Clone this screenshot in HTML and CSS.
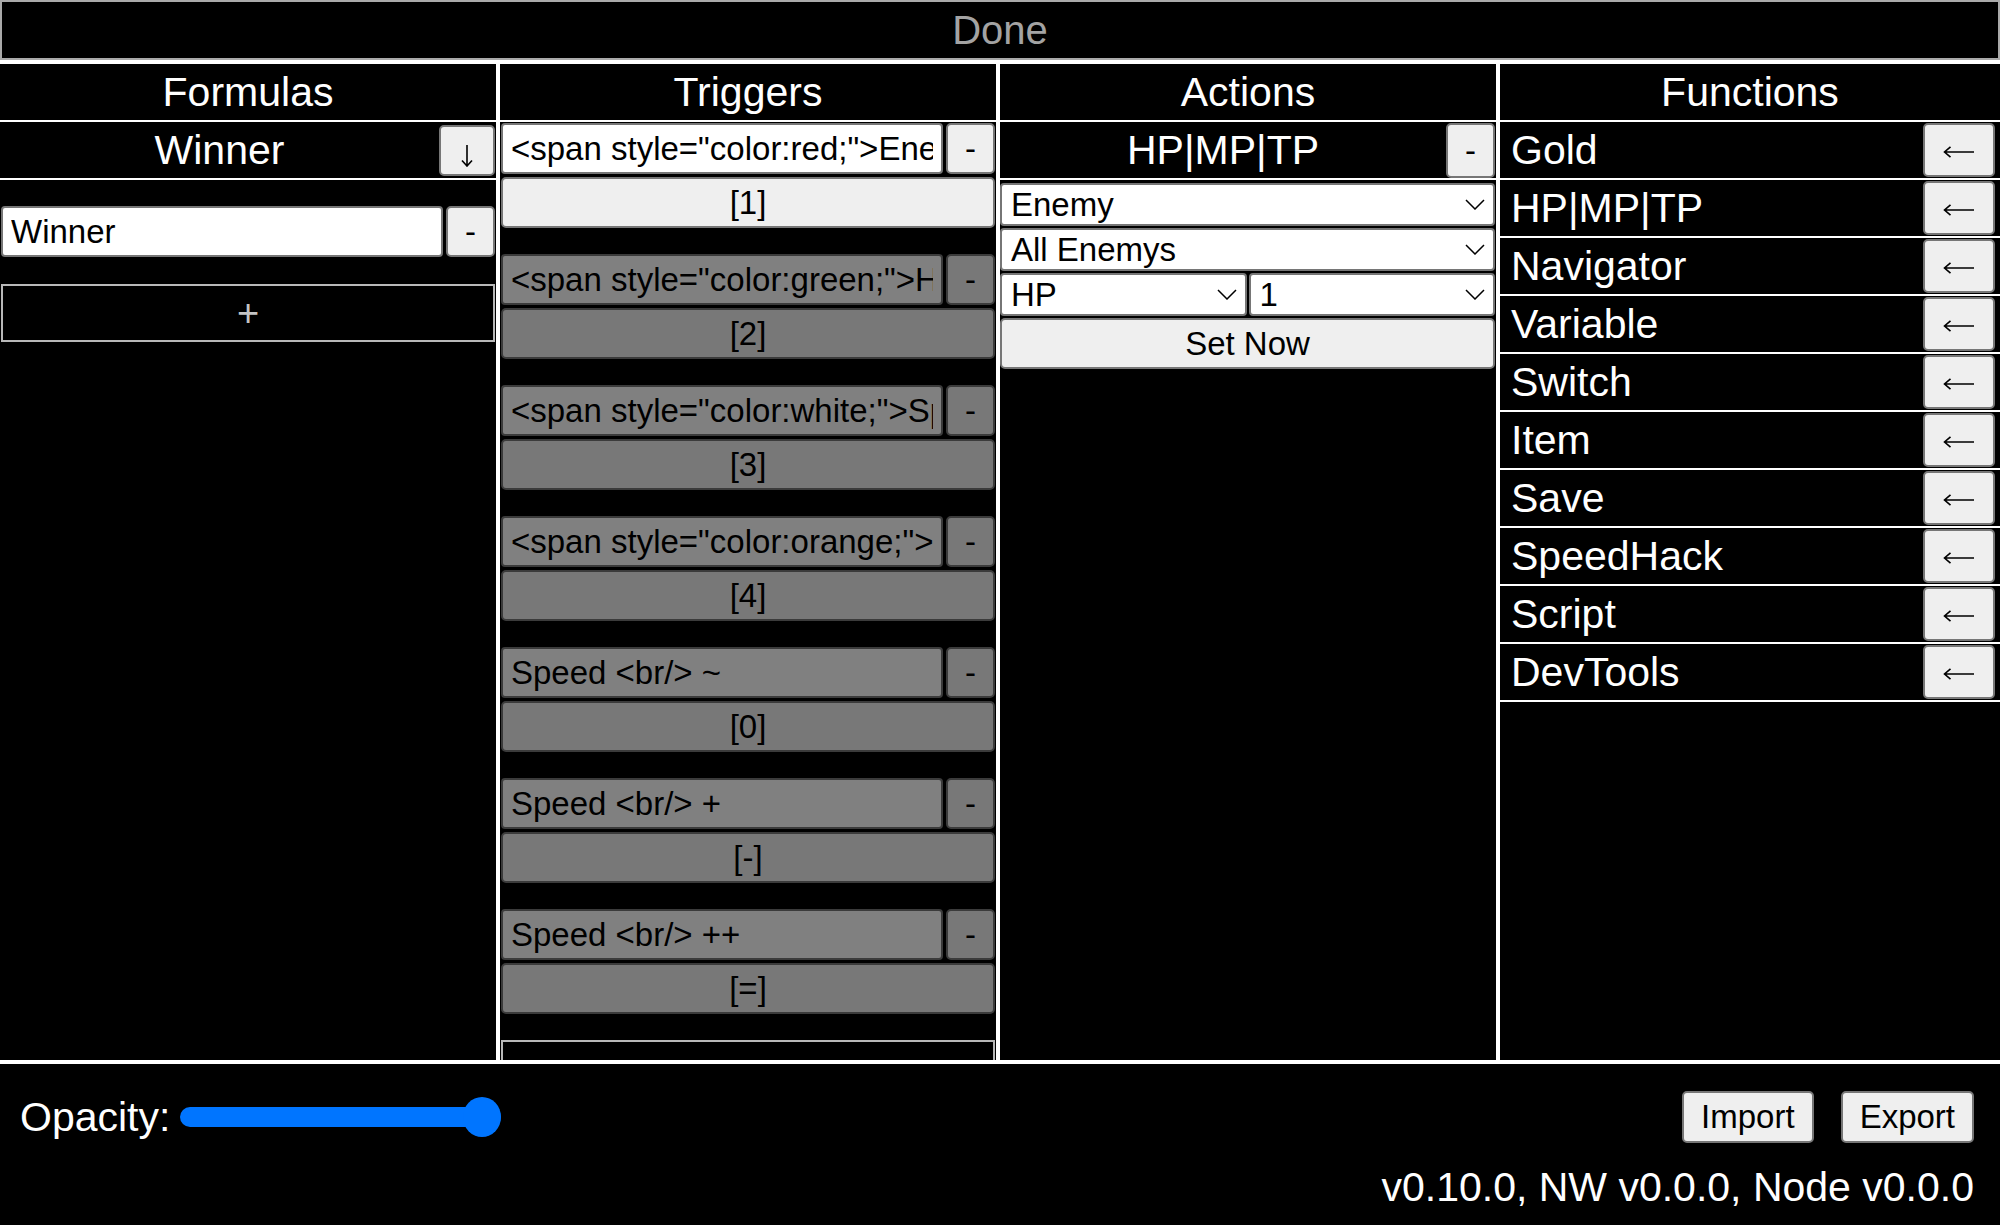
FILE: index.html
```html
<!DOCTYPE html>
<html lang="en">
<head>
<meta charset="utf-8">
<title>Cheat Panel</title>
<link rel="stylesheet" href="styles.css">
</head>
<body>
<div class="app">
  <button class="done">Done</button>

  <div class="columns">
    <section class="col">
      <div class="col-title">Formulas</div>
      <div class="head-row">
        <span class="head-label">Winner</span>
        <button class="btn btn-down"><svg width="12" height="22" viewBox="0 0 12 22"><path d="M6 0V21M1 15.5L6 21L11 15.5" fill="none" stroke="#000" stroke-width="1.6"/></svg></button>
      </div>
      <div class="formula-list">
        <div class="entry">
          <input class="field" type="text" value="Winner">
          <button class="btn btn-minus">-</button>
        </div>
        <button class="add">+</button>
      </div>
    </section>

    <section class="col">
      <div class="col-title">Triggers</div>
      <div class="trigger-list">
        <div class="trigger">
          <div class="entry">
            <input class="field" type="text" value="&lt;span style=&quot;color:red;&quot;&gt;Enemy">
            <button class="btn btn-minus">-</button>
          </div>
          <button class="btn btn-key">[1]</button>
        </div>
        <div class="trigger off">
          <div class="entry">
            <input class="field" type="text" value="&lt;span style=&quot;color:green;&quot;&gt;HP">
            <button class="btn btn-minus">-</button>
          </div>
          <button class="btn btn-key">[2]</button>
        </div>
        <div class="trigger off">
          <div class="entry">
            <input class="field" type="text" value="&lt;span style=&quot;color:white;&quot;&gt;Speed">
            <button class="btn btn-minus">-</button>
          </div>
          <button class="btn btn-key">[3]</button>
        </div>
        <div class="trigger off">
          <div class="entry">
            <input class="field" type="text" value="&lt;span style=&quot;color:orange;&quot;&gt;Gold">
            <button class="btn btn-minus">-</button>
          </div>
          <button class="btn btn-key">[4]</button>
        </div>
        <div class="trigger off">
          <div class="entry">
            <input class="field" type="text" value="Speed &lt;br/&gt; ~">
            <button class="btn btn-minus">-</button>
          </div>
          <button class="btn btn-key">[0]</button>
        </div>
        <div class="trigger off">
          <div class="entry">
            <input class="field" type="text" value="Speed &lt;br/&gt; +">
            <button class="btn btn-minus">-</button>
          </div>
          <button class="btn btn-key">[-]</button>
        </div>
        <div class="trigger off">
          <div class="entry">
            <input class="field" type="text" value="Speed &lt;br/&gt; ++">
            <button class="btn btn-minus">-</button>
          </div>
          <button class="btn btn-key">[=]</button>
        </div>
        <button class="add add-clipped" aria-label="Add trigger"></button>
      </div>
    </section>

    <section class="col">
      <div class="col-title">Actions</div>
      <div class="head-row">
        <span class="head-label">HP|MP|TP</span>
        <button class="btn btn-minus btn-head">-</button>
      </div>
      <div class="action-form">
        <div class="select-wrap">
          <select class="select"><option>Enemy</option></select>
          <svg class="chev" width="20" height="11" viewBox="0 0 20 11"><path d="M1 1L10 10L19 1" fill="none" stroke="#000" stroke-width="1.5"/></svg>
        </div>
        <div class="select-wrap">
          <select class="select"><option>All Enemys</option></select>
          <svg class="chev" width="20" height="11" viewBox="0 0 20 11"><path d="M1 1L10 10L19 1" fill="none" stroke="#000" stroke-width="1.5"/></svg>
        </div>
        <div class="select-pair">
          <div class="select-wrap">
            <select class="select"><option>HP</option></select>
            <svg class="chev" width="20" height="11" viewBox="0 0 20 11"><path d="M1 1L10 10L19 1" fill="none" stroke="#000" stroke-width="1.5"/></svg>
          </div>
          <div class="select-wrap">
            <select class="select"><option>1</option></select>
            <svg class="chev" width="20" height="11" viewBox="0 0 20 11"><path d="M1 1L10 10L19 1" fill="none" stroke="#000" stroke-width="1.5"/></svg>
          </div>
        </div>
        <button class="btn btn-set">Set Now</button>
      </div>
    </section>

    <section class="col">
      <div class="col-title">Functions</div>
      <ul class="func-list">
        <li class="func"><span class="func-name">Gold</span><button class="btn btn-go"><svg width="32" height="12" viewBox="0 0 32 12"><path d="M31 6H1.5M7.5 0.8L1.5 6L7.5 11.2" fill="none" stroke="#000" stroke-width="1.6"/></svg></button></li>
        <li class="func"><span class="func-name">HP|MP|TP</span><button class="btn btn-go"><svg width="32" height="12" viewBox="0 0 32 12"><path d="M31 6H1.5M7.5 0.8L1.5 6L7.5 11.2" fill="none" stroke="#000" stroke-width="1.6"/></svg></button></li>
        <li class="func"><span class="func-name">Navigator</span><button class="btn btn-go"><svg width="32" height="12" viewBox="0 0 32 12"><path d="M31 6H1.5M7.5 0.8L1.5 6L7.5 11.2" fill="none" stroke="#000" stroke-width="1.6"/></svg></button></li>
        <li class="func"><span class="func-name">Variable</span><button class="btn btn-go"><svg width="32" height="12" viewBox="0 0 32 12"><path d="M31 6H1.5M7.5 0.8L1.5 6L7.5 11.2" fill="none" stroke="#000" stroke-width="1.6"/></svg></button></li>
        <li class="func"><span class="func-name">Switch</span><button class="btn btn-go"><svg width="32" height="12" viewBox="0 0 32 12"><path d="M31 6H1.5M7.5 0.8L1.5 6L7.5 11.2" fill="none" stroke="#000" stroke-width="1.6"/></svg></button></li>
        <li class="func"><span class="func-name">Item</span><button class="btn btn-go"><svg width="32" height="12" viewBox="0 0 32 12"><path d="M31 6H1.5M7.5 0.8L1.5 6L7.5 11.2" fill="none" stroke="#000" stroke-width="1.6"/></svg></button></li>
        <li class="func"><span class="func-name">Save</span><button class="btn btn-go"><svg width="32" height="12" viewBox="0 0 32 12"><path d="M31 6H1.5M7.5 0.8L1.5 6L7.5 11.2" fill="none" stroke="#000" stroke-width="1.6"/></svg></button></li>
        <li class="func"><span class="func-name">SpeedHack</span><button class="btn btn-go"><svg width="32" height="12" viewBox="0 0 32 12"><path d="M31 6H1.5M7.5 0.8L1.5 6L7.5 11.2" fill="none" stroke="#000" stroke-width="1.6"/></svg></button></li>
        <li class="func"><span class="func-name">Script</span><button class="btn btn-go"><svg width="32" height="12" viewBox="0 0 32 12"><path d="M31 6H1.5M7.5 0.8L1.5 6L7.5 11.2" fill="none" stroke="#000" stroke-width="1.6"/></svg></button></li>
        <li class="func"><span class="func-name">DevTools</span><button class="btn btn-go"><svg width="32" height="12" viewBox="0 0 32 12"><path d="M31 6H1.5M7.5 0.8L1.5 6L7.5 11.2" fill="none" stroke="#000" stroke-width="1.6"/></svg></button></li>
      </ul>
    </section>
  </div>

  <footer class="footer">
    <div class="footer-row">
      <label class="opacity-label">Opacity:</label>
      <input class="slider" type="range" min="0" max="100" value="100">
      <span class="spacer"></span>
      <button class="btn btn-io">Import</button>
      <button class="btn btn-io">Export</button>
    </div>
    <div class="version">v0.10.0, NW v0.0.0, Node v0.0.0</div>
  </footer>
</div>
</body>
</html>
```

FILE: styles.css
```css
* { box-sizing: border-box; }

html, body {
  margin: 0;
  padding: 0;
  background: #000;
}

body {
  font-family: "Liberation Sans", Arial, Helvetica, sans-serif;
  color: #fff;
  overflow: hidden;
}

button, input, select {
  font-family: "Liberation Sans", Arial, Helvetica, sans-serif;
}

.app {
  display: flex;
  flex-direction: column;
  height: 1225px;
}

.done {
  flex: none;
  height: 60px;
  background: #000;
  color: #a3a3a3;
  border: 2px solid #a9a9a9;
  font-size: 40px;
  padding: 0;
}

.columns {
  flex: none;
  height: 1004px;
  display: grid;
  grid-template-columns: repeat(3, 496px) 1fr;
  gap: 4px;
  background: #fff;
  border-top: 4px solid #fff;
  border-bottom: 4px solid #fff;
}

.col {
  background: #000;
  display: flex;
  flex-direction: column;
  min-height: 0;
  overflow: hidden;
}

.col-title {
  flex: none;
  height: 58px;
  border-bottom: 2px solid #fff;
  display: flex;
  align-items: center;
  justify-content: center;
  font-size: 41px;
}

.head-row {
  flex: none;
  height: 58px;
  border-bottom: 2px solid #fff;
  display: flex;
  align-items: center;
  padding: 1px 1px 0 0;
}

.head-label {
  flex: 1;
  text-align: center;
  font-size: 41px;
}

.btn {
  background: #efefef;
  border: 2px solid #767676;
  border-radius: 5px;
  color: #000;
  font-size: 33px;
  padding: 0;
  display: flex;
  align-items: center;
  justify-content: center;
}

.btn-down {
  width: 56px;
  height: 51px;
}

.btn-down svg { margin-top: 10px; }

.btn-head {
  height: 51px;
}

.formula-list {
  display: flex;
  flex-direction: column;
  gap: 27px;
  padding: 26px 1px 0 1px;
}

.entry {
  display: flex;
  gap: 3px;
  height: 51px;
}

.field {
  flex: 1;
  min-width: 0;
  height: 100%;
  background: #fff;
  border: 2px solid #767676;
  border-radius: 4px;
  color: #000;
  font-size: 33px;
  padding: 0 8px;
}

.btn-minus {
  flex: none;
  width: 49px;
  height: 100%;
}

.add {
  flex: none;
  height: 58px;
  background: #000;
  border: 2px solid #b8b8b8;
  color: #c4c4c4;
  font-size: 38px;
  padding: 0;
}

.trigger-list {
  display: flex;
  flex-direction: column;
  padding: 1px 1px 0 1px;
}

.trigger {
  display: flex;
  flex-direction: column;
  gap: 3px;
  margin-bottom: 26px;
}

.trigger.off { opacity: 0.5; }

.btn-key {
  height: 51px;
  width: 100%;
}

.action-form {
  display: flex;
  flex-direction: column;
  gap: 2px;
  padding: 3px 1px 0 0;
}

.select-wrap {
  position: relative;
  flex: 1;
}

.select {
  -webkit-appearance: none;
  appearance: none;
  display: block;
  width: 100%;
  height: 43px;
  background: #fff;
  border: 2px solid #767676;
  border-radius: 4px;
  color: #000;
  font-size: 33px;
  padding: 0 36px 0 9px;
}

.chev {
  position: absolute;
  right: 10px;
  top: 16px;
  pointer-events: none;
}

.select-pair {
  display: flex;
  gap: 2px;
}

.btn-set {
  height: 51px;
  width: 100%;
}

.func-list {
  list-style: none;
  margin: 0;
  padding: 0;
}

.func {
  height: 58px;
  border-bottom: 2px solid #fff;
  display: flex;
  align-items: center;
  padding: 0 5px 0 11px;
}

.func-name {
  flex: 1;
  font-size: 41px;
}

.btn-go {
  width: 72px;
  height: 54px;
}

.btn-go svg { margin-top: 4px; }

.footer {
  flex: 1;
  display: flex;
  flex-direction: column;
  padding: 27px 26px 0 20px;
}

.footer-row {
  display: flex;
  align-items: center;
  height: 52px;
}

.opacity-label {
  font-size: 41px;
}

.slider {
  -webkit-appearance: none;
  appearance: none;
  width: 321px;
  height: 40px;
  margin: 0 0 0 10px;
  background: transparent;
}

.slider::-webkit-slider-runnable-track {
  height: 20px;
  background: #0075ff;
  border-radius: 10px;
}

.slider::-webkit-slider-thumb {
  -webkit-appearance: none;
  appearance: none;
  width: 38px;
  height: 40px;
  border-radius: 50%;
  background: #0075ff;
  margin-top: -10px;
}

.spacer { flex: 1; }

.btn-io {
  height: 52px;
  padding: 0 17px;
}

.btn-io + .btn-io { margin-left: 27px; }

.version {
  margin-top: 21px;
  text-align: right;
  font-size: 41px;
}
```
